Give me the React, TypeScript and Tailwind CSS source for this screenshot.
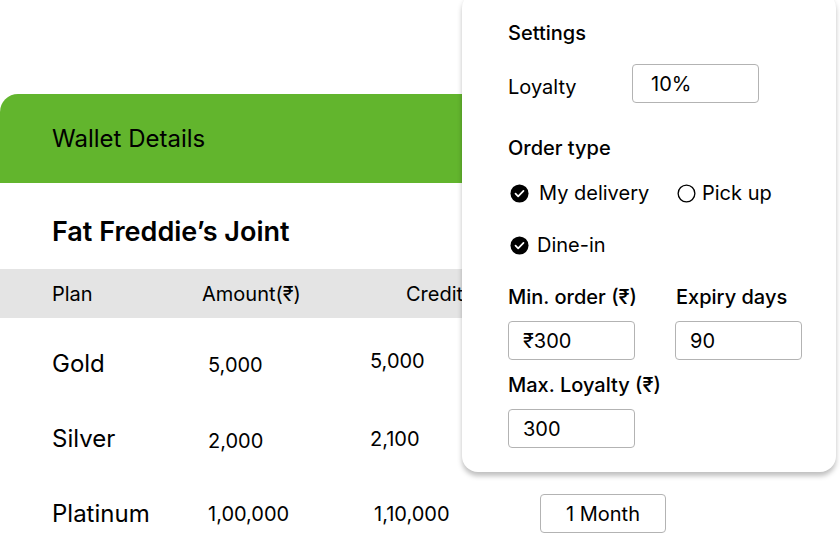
import React from 'react';

const plans = [
  { name: 'Gold', amount: '5,000', credit: '5,000', amountNudge: 'mt-[2px]', creditNudge: '-mt-[6px]' },
  { name: 'Silver', amount: '2,000', credit: '2,100', amountNudge: 'mt-[4px]', creditNudge: 'mt-0' },
  { name: 'Platinum', amount: '1,00,000', credit: '1,10,000', amountNudge: 'mt-0', creditNudge: 'mt-0', validity: '1 Month' },
];

function CheckDot() {
  return (
    <svg width="19" height="19" viewBox="0 0 20 20" className="shrink-0">
      <circle cx="10" cy="10" r="9.5" fill="#000" />
      <path d="M5.8 10.2l2.8 2.8 5.6-5.8" fill="none" stroke="#fff" strokeWidth="1.8" strokeLinecap="round" strokeLinejoin="round" />
    </svg>
  );
}

function EmptyDot() {
  return (
    <svg width="19" height="19" viewBox="0 0 20 20" className="shrink-0">
      <circle cx="10" cy="10" r="8.8" fill="#fff" stroke="#000" strokeWidth="1.4" />
    </svg>
  );
}

function Field({ value, pad = 'pl-[14px]' }: { value: string; pad?: string }) {
  return (
    <div className={`w-[127px] h-[39px] border border-[#b3b3b3] rounded-[4px] flex items-center ${pad} text-[20px] text-black`}>
      {value}
    </div>
  );
}

export default function App() {
  return (
    <div className="relative w-[840px] h-[559px] overflow-hidden bg-white font-['Inter',sans-serif] text-black">
      {/* Wallet card */}
      <div className="pt-[94px] w-[800px]">
        <div className="h-[89px] bg-[#62b52d] rounded-tl-[18px] rounded-tr-[18px] flex items-center pl-[52px]">
          <h2 className="text-[24px] font-normal leading-none">Wallet Details</h2>
        </div>

        <h1 className="pl-[52px] mt-[34px] text-[27px] font-semibold leading-[30px]">Fat Freddie’s Joint</h1>

        <div className="mt-[22px] h-[49px] bg-[#e4e4e4] flex items-center pl-[52px] text-[20px]">
          <span className="w-[150px]">Plan</span>
          <span className="w-[204px]">Amount(₹)</span>
          <span>Credit</span>
        </div>

        <div className="mt-[8px]">
          {plans.map((p) => (
            <div key={p.name} className="h-[75px] flex items-center pl-[52px]">
              <span className="w-[156px] text-[24px]">{p.name}</span>
              <span className={`w-[162px] text-[20px] ${p.amountNudge}`}>{p.amount}</span>
              <span className={`w-[170px] text-[20px] ${p.creditNudge} ${p.name === 'Platinum' ? 'pl-[4px]' : ''}`}>{p.credit}</span>
              {p.validity && (
                <div className="w-[126px] h-[39px] border border-[#b3b3b3] rounded-[4px] flex items-center justify-center text-[20px]">
                  {p.validity}
                </div>
              )}
            </div>
          ))}
        </div>
      </div>

      {/* Settings popover */}
      <div className="absolute left-[462px] top-[-8px] w-[374px] h-[480px] bg-white rounded-2xl shadow-[0_4px_5px_rgba(0,0,0,0.25)] pl-[46px] pt-[30px]">
        <div className="text-[20px] font-medium leading-[22px]">Settings</div>

        <div className="mt-[20px] flex items-center">
          <span className="w-[124px] text-[20px] mt-[6px]">Loyalty</span>
          <Field value="10%" pad="pl-[18px]" />
        </div>

        <div className="mt-[34px] text-[20px] font-medium leading-[22px]">Order type</div>

        <div className="mt-[23px] flex items-center h-[22px] text-[20px]">
          <span className="ml-[2px]"><CheckDot /></span>
          <span className="ml-[10px] w-[138px]">My delivery</span>
          <EmptyDot />
          <span className="ml-[6px]">Pick up</span>
        </div>

        <div className="mt-[30px] flex items-center h-[22px] text-[20px]">
          <span className="ml-[2px]"><CheckDot /></span>
          <span className="ml-[8px]">Dine-in</span>
        </div>

        <div className="mt-[30px] flex text-[20px] font-medium leading-[22px]">
          <span className="w-[168px]">Min. order (₹)</span>
          <span>Expiry days</span>
        </div>

        <div className="mt-[13px] flex gap-[40px]">
          <Field value="₹300" />
          <Field value="90" />
        </div>

        <div className="mt-[14px] text-[20px] font-medium leading-[22px]">Max. Loyalty (₹)</div>

        <div className="mt-[13px]">
          <Field value="300" />
        </div>
      </div>
    </div>
  );
}
